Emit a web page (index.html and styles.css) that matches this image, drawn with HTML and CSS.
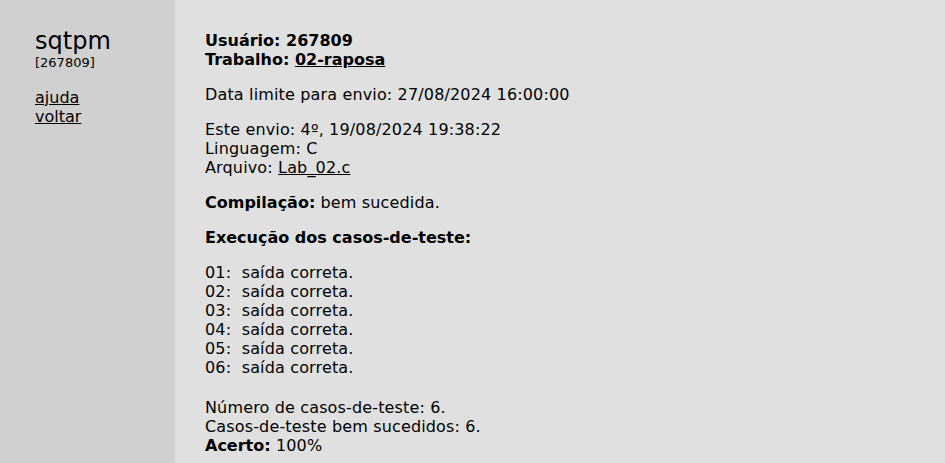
FILE: index.html
```html
<!DOCTYPE html>
<html lang="pt">
<head>
<meta charset="utf-8">
<title>sqtpm</title>
<link rel="stylesheet" href="styles.css">
</head>
<body>
<div class="layout">
  <aside class="side">
    <div class="brand">sqtpm</div>
    <div class="uid">[267809]</div>
    <nav class="nav">
      <a href="#">ajuda</a>
      <a href="#">voltar</a>
    </nav>
  </aside>
  <main class="main">
    <p class="block"><b>Usuário: 267809</b><br><b>Trabalho: <a href="#">02-raposa</a></b></p>
    <p class="block">Data limite para envio: 27/08/2024 16:00:00</p>
    <p class="block">Este envio: 4º, 19/08/2024 19:38:22<br>Linguagem: C<br>Arquivo: <a href="#">Lab_02.c</a></p>
    <p class="block"><b>Compilação:</b> bem sucedida.</p>
    <p class="block"><b>Execução dos casos-de-teste:</b></p>
    <div class="cases">
      <div>01:&nbsp; saída correta.</div>
      <div>02:&nbsp; saída correta.</div>
      <div>03:&nbsp; saída correta.</div>
      <div>04:&nbsp; saída correta.</div>
      <div>05:&nbsp; saída correta.</div>
      <div>06:&nbsp; saída correta.</div>
    </div>
    <p class="block summary">Número de casos-de-teste: 6.<br>Casos-de-teste bem sucedidos: 6.<br><b>Acerto:</b> 100%</p>
  </main>
</div>
</body>
</html>
```
FILE: styles.css
```css
html, body {
  margin: 0;
  padding: 0;
  height: 100%;
}
body {
  font-family: "DejaVu Sans", Verdana, sans-serif;
  font-size: 16px;
  color: #000;
  background: #e0e0e0;
}
.layout {
  display: flex;
  min-height: 100%;
}
.side {
  width: 140px;
  flex: none;
  background: #d0d0d0;
  padding: 27px 0 0 35px;
}
.brand {
  font-size: 24px;
  line-height: 28px;
}
.uid {
  font-size: 13px;
  line-height: 16px;
}
.nav {
  display: flex;
  flex-direction: column;
  margin-top: 17px;
  line-height: 19px;
}
a {
  color: #000;
  text-decoration: underline;
}
.main {
  flex: 1;
  padding: 31px 0 0 30px;
}
.block {
  margin: 0 0 16px;
  line-height: 19px;
  letter-spacing: 0.15px;
}
.block b {
  letter-spacing: 0;
}
.cases {
  line-height: 19px;
  margin-bottom: 21px;
  letter-spacing: 0.15px;
}
.summary {
  margin: 0;
}
```
